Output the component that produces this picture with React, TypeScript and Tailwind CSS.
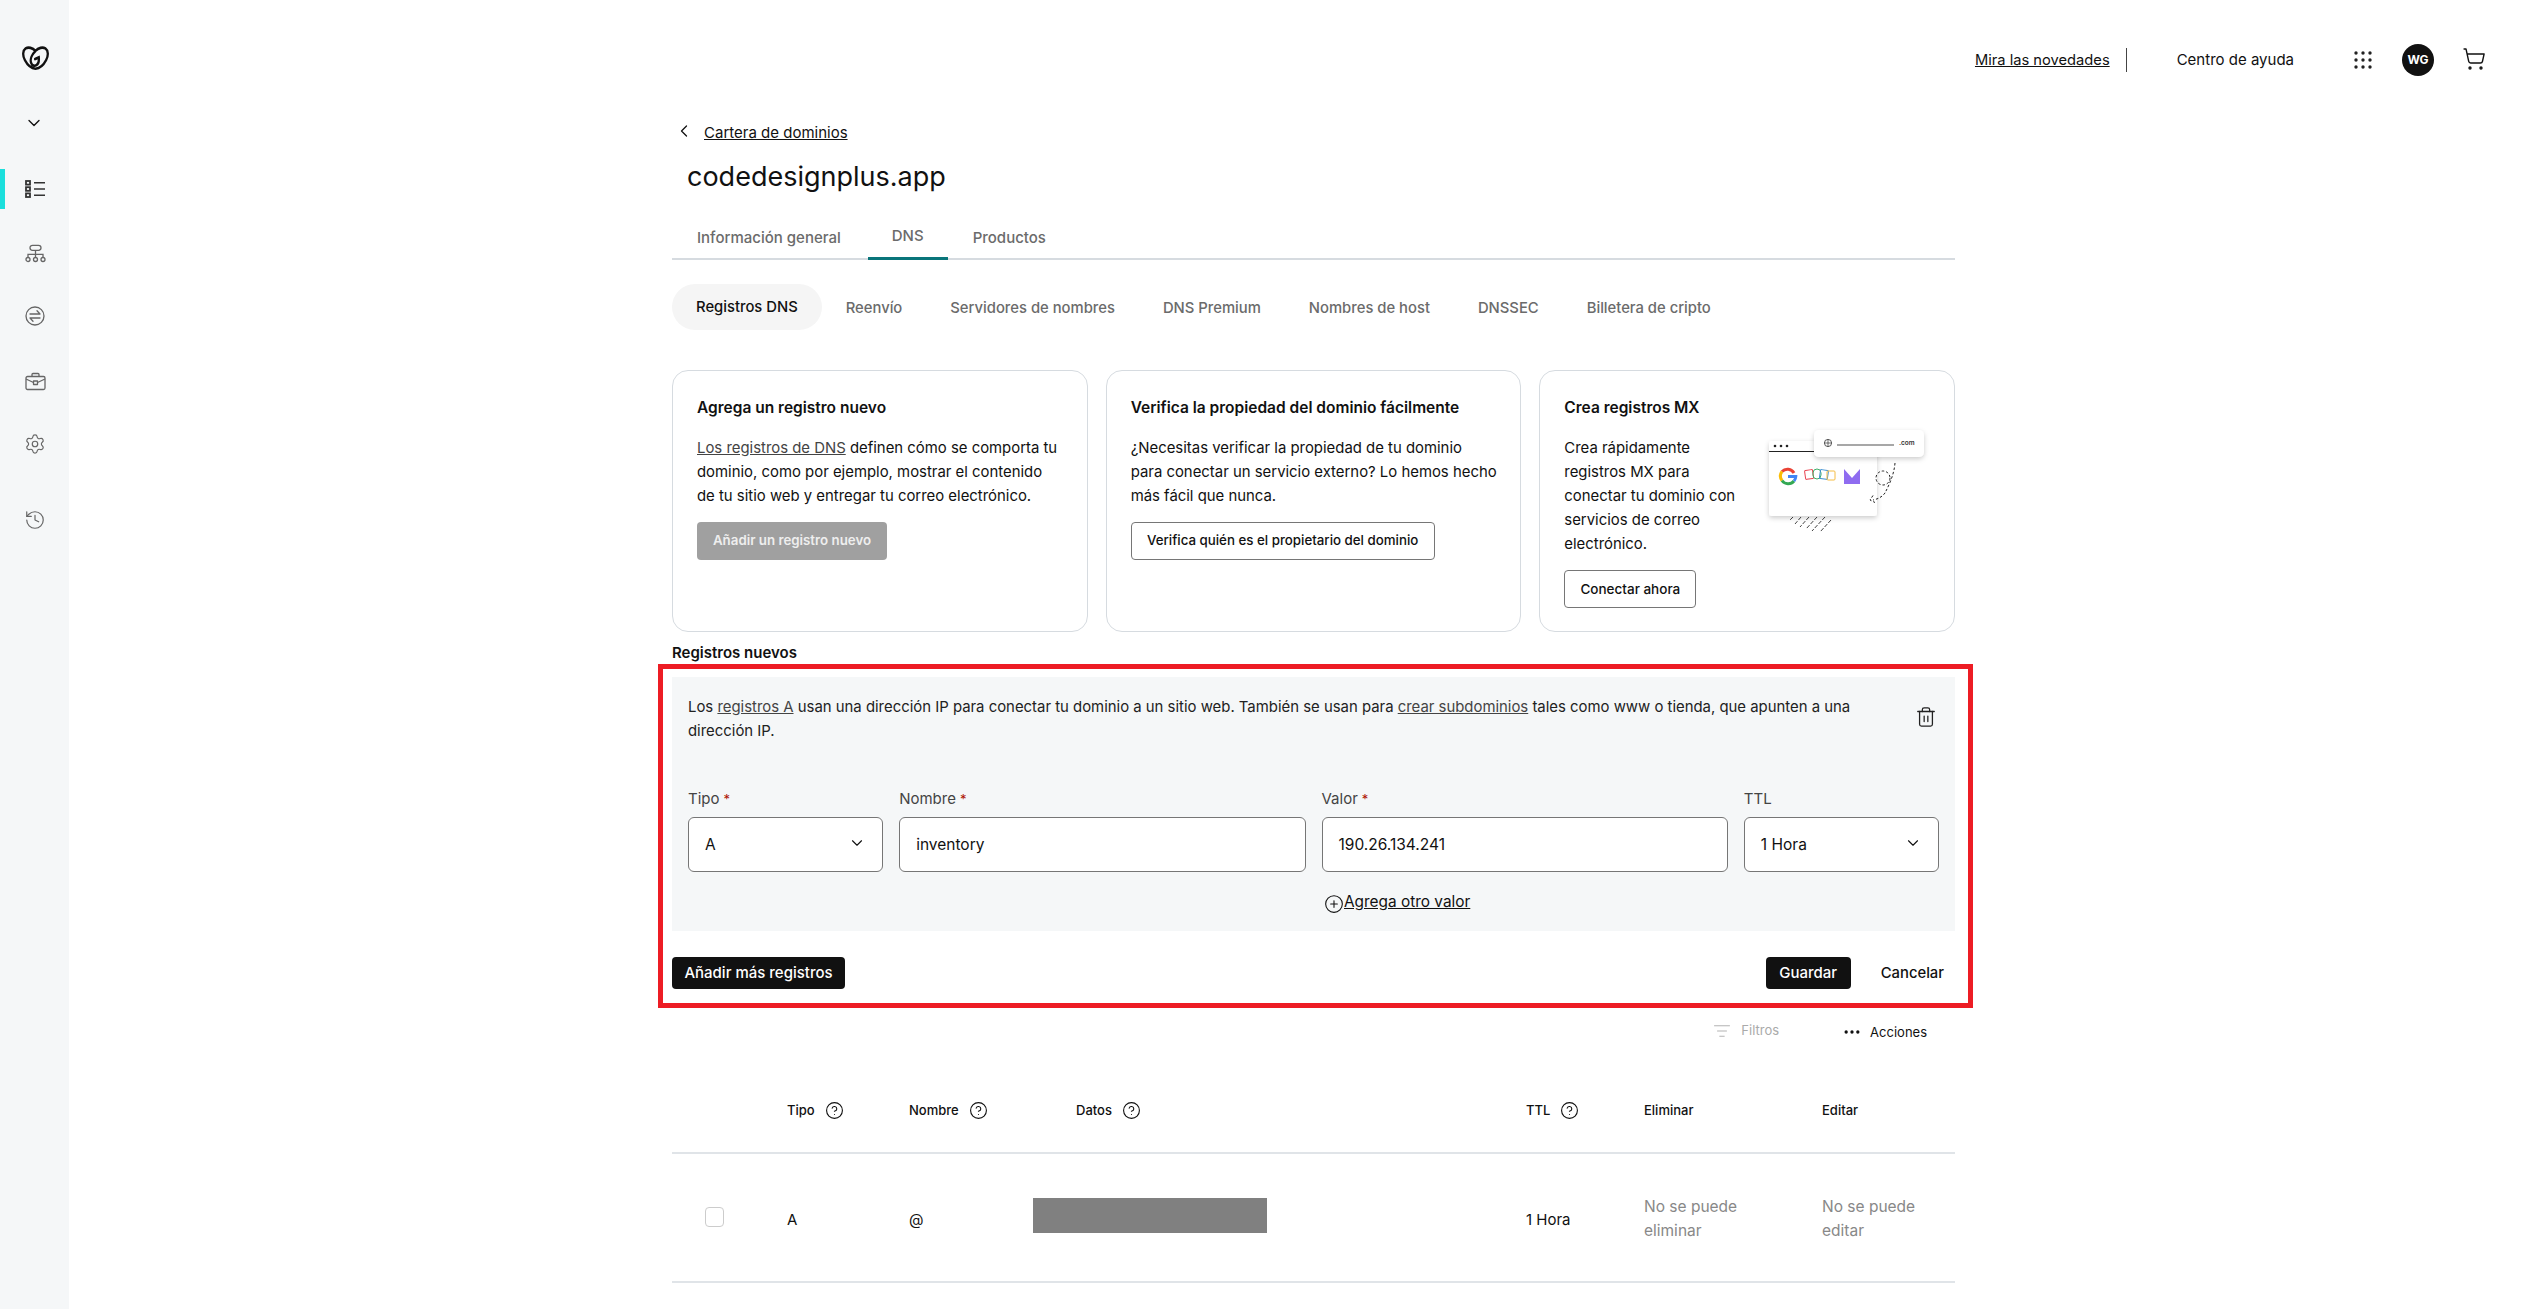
import { ChevronDown, ChevronLeft, CircleHelp, CirclePlus, Ellipsis, History, ListFilter, Settings, ShoppingCart, Trash2 } from 'lucide-react';

const SUB_TABS = ['Reenvío', 'Servidores de nombres', 'DNS Premium', 'Nombres de host', 'DNSSEC', 'Billetera de cripto'];

function Logo() {
  return (
    <svg width="27" height="24" viewBox="0 0 28 22" preserveAspectRatio="none" fill="none" stroke="#111" strokeWidth="2.4" strokeLinecap="round">
      <path d="M14 4.500C11 1.500 6.500 0.800 3.800 2.200C0.600 4.200 0.500 8.800 3 13C5 16.400 9 20.500 14 20.800C19 20.500 23 16.400 25 13C27.500 8.800 27.400 4.200 24.200 2.200C21.500 0.800 17 1.500 14 4.500C10.500 7.500 8 12 9.500 15.500C10.500 18 13 18.600 15 17.600C17 16.600 17.800 14 17.400 10.500L13.600 12" />
    </svg>
  );
}

function RecordsIcon() {
  return (
    <svg width="21" height="18" viewBox="0 0 21 18" fill="none" stroke="#333" strokeWidth="1.5">
      <rect x="1" y="1" width="4" height="3.600" strokeWidth="1.800" />
      <rect x="1" y="7.200" width="4" height="3.600" strokeWidth="1.800" />
      <rect x="1" y="13.400" width="4" height="3.600" strokeWidth="1.800" />
      <path d="M9 2.800h11M9 9h11M9 15.200h11" />
    </svg>
  );
}

function SitemapIcon() {
  return (
    <svg width="21" height="19" viewBox="0 0 21 18" fill="none" stroke="#666" strokeWidth="1.300">
      <rect x="5" y="0.800" width="11" height="5" rx="2.500" />
      <path d="M10.500 5.800v7M3 13v-3.200h15V13" />
      <circle cx="3" cy="15" r="2" />
      <circle cx="10.500" cy="15" r="2" />
      <circle cx="18" cy="15" r="2" />
    </svg>
  );
}

function ExchangeIcon() {
  return (
    <svg width="20" height="20" viewBox="0 0 20 20" fill="none" stroke="#666" strokeWidth="1.300" strokeLinecap="round" strokeLinejoin="round">
      <circle cx="10" cy="10" r="9" />
      <path d="M5 8h10M12 4.800L15 8M15 12H5M8 15.200L5 12" />
    </svg>
  );
}

function BriefcaseIcon() {
  return (
    <svg width="21" height="19" viewBox="0 0 21 18" fill="none" stroke="#666" strokeWidth="1.300" strokeLinejoin="round">
      <rect x="1" y="4" width="19" height="13" rx="1.500" />
      <path d="M7 4V2a1 1 0 0 1 1-1h5a1 1 0 0 1 1 1v2M1 6.500l7.500 3.500M20 6.500L12.500 10" />
      <rect x="8.500" y="8.500" width="4" height="3.500" />
    </svg>
  );
}

function AppsIcon() {
  const dots = [2, 9, 16];
  return (
    <svg width="18" height="18" viewBox="0 0 18 18" fill="#222">
      {dots.map((y) => dots.map((x) => <circle key={`${x}-${y}`} cx={x} cy={y} r="1.700" />))}
    </svg>
  );
}

// drawing beside "Crea registros MX"
function MxIllustration() {
  return (
    <svg width="172" height="112" viewBox="0 0 172 112" fill="none" className="shrink-0">
      <defs>
        <filter id="soft" x="-20%" y="-20%" width="140%" height="150%">
          <feDropShadow dx="0" dy="2" stdDeviation="2.500" floodColor="#000" floodOpacity="0.2" />
        </filter>
      </defs>
      <g stroke="#444" strokeWidth="1">
        <path d="M34 94l-3 3M42 94l-6 7M50 94l-9 10M58 94l-11 12M66 94l-13 14M72 97l-11 12" strokeDasharray="4 1.500" />
      </g>
      <rect x="10" y="18" width="108" height="75" rx="3" fill="#fff" filter="url(#soft)" />
      <path d="M10 28.500h66" stroke="#222" strokeWidth="1" />
      <circle cx="16" cy="23" r="1.300" fill="#222" />
      <circle cx="22" cy="23" r="1.300" fill="#222" />
      <circle cx="28" cy="23" r="1.300" fill="#222" />
      <g strokeWidth="3" fill="none">
        <path d="M35 50a7.500 7.500 0 0 0-12-1.500" stroke="#ea4335" />
        <path d="M23 48.500a7.500 7.500 0 0 0 0 9" stroke="#fbbc05" />
        <path d="M23 57.500a7.500 7.500 0 0 0 12 .5" stroke="#34a853" />
        <path d="M35 58a7.500 7.500 0 0 0 1.800-4.500H29" stroke="#4285f4" />
      </g>
      <g strokeWidth="1" fill="none">
        <rect x="46" y="47" width="8" height="9" rx="1" stroke="#e8414e" transform="rotate(-8 50 51)" />
        <rect x="54" y="46" width="8" height="10" rx="4" stroke="#3fae6a" />
        <rect x="61" y="47" width="8" height="9" rx="1" stroke="#3d8fd1" transform="rotate(8 65 51)" />
        <rect x="68" y="48" width="8" height="9" rx="1" stroke="#f5bd45" />
      </g>
      <path d="M85 46l8 9 8-9v15H85z" fill="#8f6cf0" />
      <rect x="55" y="7" width="110" height="27" rx="5" fill="#fff" filter="url(#soft)" />
      <circle cx="69" cy="20" r="3.600" stroke="#333" strokeWidth="0.800" />
      <path d="M65.400 20h7.200M69 16.400v7.200" stroke="#333" strokeWidth="0.700" />
      <path d="M78 22h57" stroke="#8a8a8a" strokeWidth="1.600" />
      <text x="140" y="22" fontSize="6.500" fontFamily="Inter, sans-serif" fontWeight="600" fill="#333">.com</text>
      <circle cx="124" cy="55" r="7" stroke="#222" strokeWidth="1" strokeDasharray="2.500 2" />
      <path d="M136 40c-1 12-6 22-10 30c-3 4-7 6-12 7M114 72.500l-3 4.500l5 2.500" stroke="#222" strokeWidth="1" strokeDasharray="2.500 2" />
    </svg>
  );
}

function InfoCard({ title, children }: { title: string; children: React.ReactNode }) {
  return (
    <div className="rounded-[16px] border border-[#d6dbe0] pt-[25px] pl-[24px] pr-[14px] h-[262px]">
      <h3 className="text-[15.500px] leading-[24px] font-semibold text-[#111]">{title}</h3>
      {children}
    </div>
  );
}

function SelectBox({ value }: { value: string }) {
  return (
    <div className="flex items-center justify-between h-[55px] bg-white border border-[#767676] rounded-[6px] pl-[16px] pr-[16px]">
      <span className="text-[15.500px] text-[#111] pt-[1px]">{value}</span>
      <ChevronDown size={18} strokeWidth={1.5} className="text-[#111] -mt-[3px]" />
    </div>
  );
}

function TextBox({ value }: { value: string }) {
  return (
    <div className="flex items-center h-[55px] bg-white border border-[#767676] rounded-[6px] px-[16px]">
      <span className="text-[15.500px] text-[#111] pt-[1px]">{value}</span>
    </div>
  );
}

function FieldLabel({ text, required }: { text: string; required?: boolean }) {
  return (
    <div className="text-[15px] leading-[20px] text-[#444] mb-[8px]">
      {text}
      {required && <span className="text-[13px] text-[#ae1302] ml-[4px]">*</span>}
    </div>
  );
}

function HeadCell({ text, help }: { text: string; help?: boolean }) {
  return (
    <div className="flex items-center gap-[10px] text-[13px] font-medium text-[#111]">
      {text}
      {help && <CircleHelp size={19} strokeWidth={1.4} className="text-[#111]" />}
    </div>
  );
}

export default function App() {
  return (
    <div className="flex h-[1309px] overflow-hidden bg-white font-['Inter',sans-serif] text-[#111]">
      {/* Sidebar */}
      <aside className="w-[69px] shrink-0 bg-[#f5f7f8] flex flex-col">
        <div className="h-[46px]" />
        <div className="pl-[22px]"><Logo /></div>
        <div className="pl-[24px] mt-[43px]"><ChevronDown size={20} strokeWidth={1.6} className="text-[#111]" /></div>
        <div className="mt-[36px] flex flex-col">
          <div className="flex items-center h-[40px] border-l-[5px] border-[#1bdfdc] pl-[20px]"><RecordsIcon /></div>
          <div className="flex items-center h-[20px] mt-[34px] pl-[25px]"><SitemapIcon /></div>
          <div className="flex items-center h-[20px] mt-[43px] pl-[25px]"><ExchangeIcon /></div>
          <div className="flex items-center h-[20px] mt-[45px] pl-[25px]"><BriefcaseIcon /></div>
          <div className="flex items-center h-[20px] mt-[43px] pl-[24px]"><Settings size={22} strokeWidth={1.3} className="text-[#666]" /></div>
          <div className="flex items-center h-[20px] mt-[56px] pl-[24px]"><History size={22} strokeWidth={1.3} className="text-[#666]" /></div>
        </div>
      </aside>

      <main className="flex-1 min-w-0">
        {/* Top bar */}
        <header className="flex items-center justify-end h-[120px] pr-[44px]">
          <a className="text-[14.700px] underline text-[#111]">Mira las novedades</a>
          <span className="w-px h-[24px] bg-[#444] ml-[16px]" />
          <span className="text-[15px] ml-[50px]">Centro de ayuda</span>
          <span className="ml-[60px]"><AppsIcon /></span>
          <span className="ml-[30px] flex items-center justify-center w-[32px] h-[32px] rounded-full bg-[#111] text-white text-[12px] font-bold">WG</span>
          <ShoppingCart size={24} strokeWidth={1.4} className="ml-[28px] -mt-[2px]" />
        </header>

        <div className="ml-[603px] w-[1283px]">
          <div className="flex items-center h-[26px] text-[15px]">
            <ChevronLeft size={20} strokeWidth={1.5} className="ml-[2px] -mt-[5px]" />
            <a className="underline ml-[10px]">Cartera de dominios</a>
          </div>
          <h1 className="mt-[11px] ml-[15px] text-[27px] leading-[40px] text-[#111]">codedesignplus.app</h1>

          {/* Main tabs */}
          <div className="mt-[18px] flex h-[45px] border-b-2 border-[#d6dbe0] pl-[25px] text-[15px] font-medium text-[#6b6b6b]">
            <span className="pt-[12px]">Información general</span>
            <span className="ml-[27px] px-[24px] pt-[10px] h-[45px] border-b-[3px] border-[#09757a]">DNS</span>
            <span className="ml-[25px] pt-[12px]">Productos</span>
          </div>

          {/* DNS sub tabs */}
          <div className="mt-[24px] flex items-center gap-[48px] h-[46px] text-[14.800px] font-medium text-[#6b6b6b]">
            <span className="flex items-center h-[46px] px-[24px] -mr-[24px] pt-[1px] rounded-[23px] bg-[#f5f5f5] text-[#111]">Registros DNS</span>
            {SUB_TABS.map((tab) => (
              <span key={tab} className="pt-[3px]">{tab}</span>
            ))}
          </div>

          {/* Info cards */}
          <div className="mt-[40px] grid grid-cols-3 gap-[18px]">
            <InfoCard title="Agrega un registro nuevo">
              <p className="mt-[16px] text-[14.900px] leading-[24px] text-[#111]">
                <a className="underline text-[#444]">Los registros de DNS</a> definen cómo se comporta tu<br />
                dominio, como por ejemplo, mostrar el contenido<br />
                de tu sitio web y entregar tu correo electrónico.
              </p>
              <button className="mt-[14px] h-[38px] w-[190px] rounded-[4px] bg-[#a0a0a0] text-[13.300px] font-semibold text-[#eee]">Añadir un registro nuevo</button>
            </InfoCard>
            <InfoCard title="Verifica la propiedad del dominio fácilmente">
              <p className="mt-[16px] text-[14.900px] leading-[24px] text-[#111]">
                ¿Necesitas verificar la propiedad de tu dominio<br />
                para conectar un servicio externo? Lo hemos hecho<br />
                más fácil que nunca.
              </p>
              <button className="mt-[14px] h-[38px] w-[304px] rounded-[4px] border border-[#767676] text-[13.300px] font-medium text-[#111]">Verifica quién es el propietario del dominio</button>
            </InfoCard>
            <InfoCard title="Crea registros MX">
              <div className="flex mt-[16px]">
                <div className="w-[190px] shrink-0">
                  <p className="text-[14.900px] leading-[24px] text-[#111]">Crea rápidamente registros MX para conectar tu dominio con servicios de correo electrónico.</p>
                  <button className="mt-[14px] h-[38px] w-[132px] rounded-[4px] border border-[#767676] text-[13.500px] font-medium text-[#111]">Conectar ahora</button>
                </div>
                <div className="-mt-[13px] ml-[5px]"><MxIllustration /></div>
              </div>
            </InfoCard>
          </div>

          <h2 className="mt-[11px] text-[15px] leading-[20px] font-semibold text-[#111]">Registros nuevos</h2>

          {/* Highlighted new record */}
          <div className="mt-px -ml-[14px] -mr-[18px] border-[5px] border-[#ed1c24] pl-[9px] pr-[13px] pt-[8px] pb-[14px]">
            <section className="bg-[#f5f7f8] h-[254px] px-[16px] pt-[18px]">
              <div className="flex justify-between">
                <p className="w-[1190px] text-[14.900px] leading-[24px] text-[#222]">
                  Los <a className="underline text-[#444]">registros A</a> usan una dirección IP para conectar tu dominio a un sitio web. También se usan para <a className="underline text-[#444]">crear subdominios</a> tales como www o tienda, que apunten a una dirección IP.
                </p>
                <Trash2 size={22} strokeWidth={1.4} className="text-[#222] mt-[11px] mr-[2px]" />
              </div>
              <div className="mt-[46px] grid grid-cols-6 gap-x-[16px]">
                <div>
                  <FieldLabel text="Tipo" required />
                  <SelectBox value="A" />
                </div>
                <div className="col-span-2">
                  <FieldLabel text="Nombre" required />
                  <TextBox value="inventory" />
                </div>
                <div className="col-span-2">
                  <FieldLabel text="Valor" required />
                  <TextBox value="190.26.134.241" />
                </div>
                <div>
                  <FieldLabel text="TTL" />
                  <SelectBox value="1 Hora" />
                </div>
              </div>
              <div className="mt-[17px] ml-[636px] flex items-center">
                <CirclePlus size={20} strokeWidth={1.3} className="text-[#111] mt-[5px]" />
                <a className="underline text-[15.400px] text-[#111]">Agrega otro valor</a>
              </div>
            </section>
            <div className="mt-[26px] flex items-center">
              <button className="h-[32px] w-[173px] rounded-[4px] bg-[#111] text-white text-[15px] font-medium">Añadir más registros</button>
              <button className="ml-auto h-[32px] w-[85px] rounded-[4px] bg-[#111] text-white text-[15px] font-medium">Guardar</button>
              <button className="ml-[30px] mr-[11px] text-[14.800px] font-medium text-[#111]">Cancelar</button>
            </div>
          </div>

          {/* Table toolbar */}
          <div className="mt-[13px] flex items-center justify-end h-[20px] pr-[28px] text-[13px]">
            <ListFilter size={18} strokeWidth={1.2} className="text-[#aaa]" />
            <span className="ml-[10px] text-[#aaa]">Filtros</span>
            <Ellipsis size={20} strokeWidth={2} className="ml-[63px] text-[#111] mt-[2px]" />
            <span className="ml-[8px] mt-[3px]">Acciones</span>
          </div>

          {/* Records table */}
          <div className="mt-[50px] grid grid-cols-[115px_122px_167px_450px_118px_178px_133px] items-center h-[63px] pb-[22px] border-b-2 border-[#e0e4e8]">
            <span />
            <HeadCell text="Tipo" help />
            <HeadCell text="Nombre" help />
            <HeadCell text="Datos" help />
            <HeadCell text="TTL" help />
            <HeadCell text="Eliminar" />
            <HeadCell text="Editar" />
          </div>
          <div className="grid grid-cols-[115px_122px_167px_450px_118px_178px_133px] items-center h-[129px] border-b-2 border-[#e0e4e8] text-[15px]">
            <div className="pl-[33px] -mt-[2px]"><div className="w-[19px] h-[20px] rounded-[4px] border border-[#ccc] bg-white" /></div>
            <span className="pt-[6px]">A</span>
            <span className="pt-[6px]">@</span>
            <div className="-ml-[43px] -mt-[5px] w-[234px] h-[35px] bg-[#808080]" />
            <span className="pt-[6px]">1 Hora</span>
            <span className="pt-[2px] text-[15.500px] leading-[24px] text-[#888] w-[110px]">No se puede eliminar</span>
            <span className="pt-[2px] text-[15.500px] leading-[24px] text-[#888] w-[110px]">No se puede editar</span>
          </div>
        </div>
      </main>
    </div>
  );
}
